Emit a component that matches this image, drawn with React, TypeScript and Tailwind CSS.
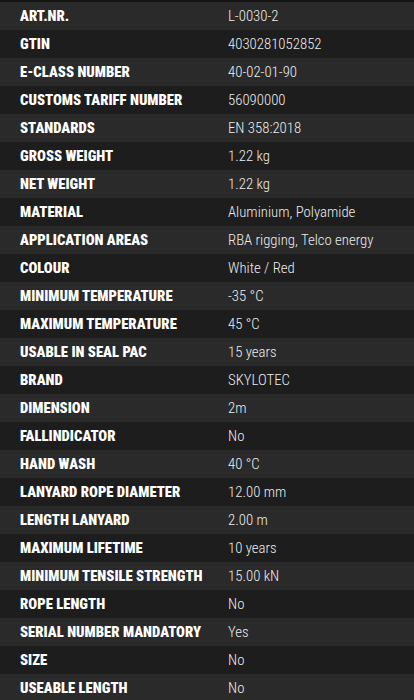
import React from 'react';

interface SpecRow {
  label: string;
  value: string;
}

const rows: SpecRow[] = [
  { label: 'ART.NR.', value: 'L-0030-2' },
  { label: 'GTIN', value: '4030281052852' },
  { label: 'E-CLASS NUMBER', value: '40-02-01-90' },
  { label: 'CUSTOMS TARIFF NUMBER', value: '56090000' },
  { label: 'STANDARDS', value: 'EN 358:2018' },
  { label: 'GROSS WEIGHT', value: '1.22 kg' },
  { label: 'NET WEIGHT', value: '1.22 kg' },
  { label: 'MATERIAL', value: 'Aluminium, Polyamide' },
  { label: 'APPLICATION AREAS', value: 'RBA rigging, Telco energy' },
  { label: 'COLOUR', value: 'White / Red' },
  { label: 'MINIMUM TEMPERATURE', value: '-35 °C' },
  { label: 'MAXIMUM TEMPERATURE', value: '45 °C' },
  { label: 'USABLE IN SEAL PAC', value: '15 years' },
  { label: 'BRAND', value: 'SKYLOTEC' },
  { label: 'DIMENSION', value: '2m' },
  { label: 'FALLINDICATOR', value: 'No' },
  { label: 'HAND WASH', value: '40 °C' },
  { label: 'LANYARD ROPE DIAMETER', value: '12.00 mm' },
  { label: 'LENGTH LANYARD', value: '2.00 m' },
  { label: 'MAXIMUM LIFETIME', value: '10 years' },
  { label: 'MINIMUM TENSILE STRENGTH', value: '15.00 kN' },
  { label: 'ROPE LENGTH', value: 'No' },
  { label: 'SERIAL NUMBER MANDATORY', value: 'Yes' },
  { label: 'SIZE', value: 'No' },
  { label: 'USEABLE LENGTH', value: 'No' },
];

export default function App() {
  return (
    <div className="min-h-[700px] bg-[#141414] pt-[2px] font-['Roboto_Condensed',_'Liberation_Sans',_sans-serif]">
      {rows.map((row, idx) => (
        <div
          key={row.label}
          className={`grid h-[28px] grid-cols-[228px_1fr] items-center ${
            idx % 2 === 0 ? 'bg-[#2a2a2a]' : 'bg-[#1d1d1d]'
          }`}
        >
          <div className="pl-[20px] text-[14.7px] font-black uppercase leading-none text-white">
            {row.label}
          </div>
          <div className="text-[14.8px] font-light leading-none text-[#ececec]">{row.value}</div>
        </div>
      ))}
    </div>
  );
}
